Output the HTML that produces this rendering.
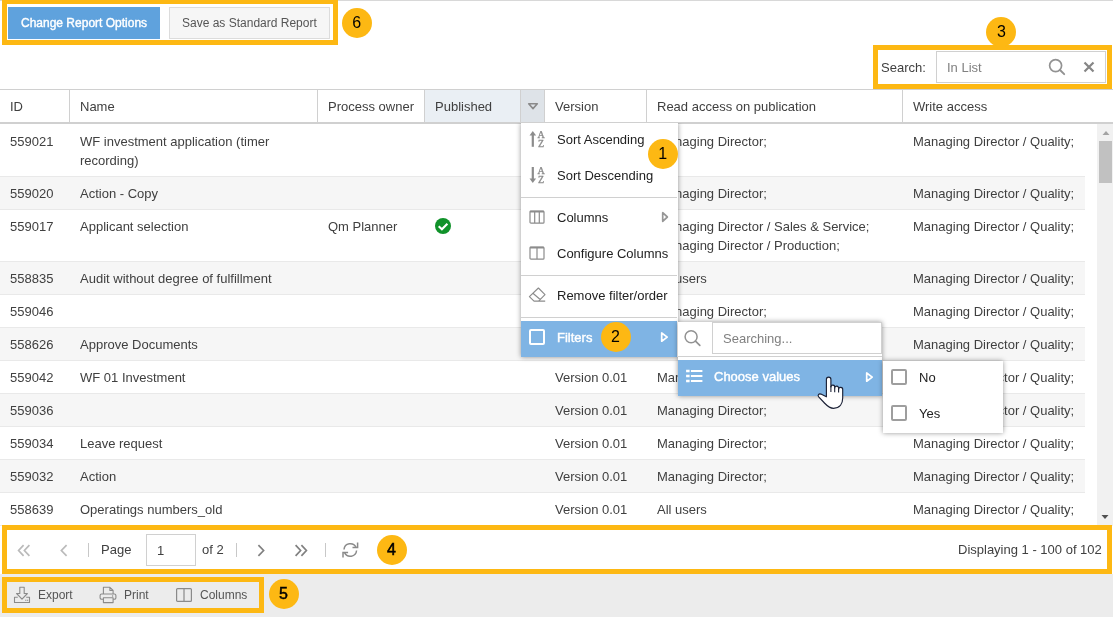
<!DOCTYPE html>
<html>
<head>
<meta charset="utf-8">
<title>Report</title>
<style>
html,body{margin:0;padding:0;}
body{width:1113px;height:617px;position:relative;overflow:hidden;background:#fff;font-family:"Liberation Sans",Arial,sans-serif;font-size:13px;color:#404040;}
.abs{position:absolute;}
.t{position:absolute;white-space:nowrap;line-height:18px;}
.hl{position:absolute;border:5px solid #fdb813;box-sizing:border-box;}
.num{position:absolute;width:30px;height:30px;border-radius:15px;background:#fdb813;color:#000;font-size:16px;line-height:30px;text-align:center;}
.row{position:absolute;left:0;width:1085px;border-bottom:1px solid #e9e9e9;box-sizing:border-box;}
.alt{background:#f6f6f6;}
.hsep{position:absolute;top:90px;width:1px;height:32px;background:#d0d0d0;}
.menu{position:absolute;background:#fff;box-sizing:border-box;box-shadow:0 0 5px rgba(0,0,0,0.42);}
.msep{position:absolute;height:1px;background:#d0d0d0;}
</style>
</head>
<body>
<div id="root" style="position:absolute;left:0;top:0;width:1113px;height:617px;will-change:transform;">
<!-- top line -->
<div class="abs" style="left:0;top:0;width:1113px;height:1px;background:#d8d8d8"></div>

<!-- top buttons -->
<div class="abs" style="left:8px;top:7px;width:152px;height:32px;background:#5fa2dd;"></div>
<div class="t" style="left:21px;top:14px;font-size:12px;color:#fff;-webkit-text-stroke:0.4px #fff;">Change Report Options</div>
<div class="abs" style="left:169px;top:7px;width:161px;height:32px;background:#f6f6f6;border:1px solid #dcdcdc;box-sizing:border-box;"></div>
<div class="t" style="left:182px;top:14px;font-size:12px;color:#555;">Save as Standard Report</div>
<div class="hl" style="left:2px;top:-1px;width:336px;height:46px;"></div>
<div class="num" style="left:341.6px;top:7.5px;">6</div>

<!-- search -->
<div class="t" style="left:881px;top:59px;">Search:</div>
<div class="abs" style="left:936px;top:51px;width:170px;height:32px;border:1px solid #d0d0d0;box-sizing:border-box;background:#fff;"></div>
<div class="t" style="left:947px;top:59px;color:#808080;">In List</div>
<svg class="abs" style="left:1046px;top:57px" width="22" height="22" viewBox="0 0 22 22"><circle cx="9.6" cy="8.6" r="6" fill="none" stroke="#929292" stroke-width="1.7"/><path d="M14 13 L18.2 17.2" stroke="#929292" stroke-width="1.9" stroke-linecap="round"/></svg>
<svg class="abs" style="left:1082px;top:60px" width="14" height="14" viewBox="0 0 14 14"><path d="M2.5 2.5 L11.5 11.5 M11.5 2.5 L2.5 11.5" stroke="#868686" stroke-width="2.2"/></svg>
<div class="hl" style="left:873px;top:45px;width:239px;height:44px;"></div>
<div class="num" style="left:986.4px;top:16.5px;">3</div>

<!-- header -->
<div class="abs" style="left:0;top:89px;width:1113px;height:1px;background:#d0d0d0"></div>
<div class="abs" style="left:0;top:122px;width:1113px;height:2px;background:#d0d0d0"></div>
<div class="abs" style="left:425px;top:90px;width:95px;height:32px;background:#eaeff4"></div>
<div class="abs" style="left:520px;top:90px;width:24px;height:32px;background:#dee3e8;border-left:1px solid #d0d0d0;box-sizing:border-box"></div>
<svg class="abs" style="left:526.5px;top:102px" width="12" height="10" viewBox="0 0 12 10"><path d="M1.7 1.8 L10.3 1.8 L6 6.6 Z" fill="none" stroke="#8a8a8a" stroke-width="1.6" stroke-linejoin="round"/></svg>
<div class="hsep" style="left:69px"></div>
<div class="hsep" style="left:317px"></div>
<div class="hsep" style="left:424px"></div>
<div class="hsep" style="left:544px"></div>
<div class="hsep" style="left:646px"></div>
<div class="hsep" style="left:902px"></div>
<div class="t" style="left:10px;top:98px;">ID</div>
<div class="t" style="left:80px;top:98px;">Name</div>
<div class="t" style="left:328px;top:98px;">Process owner</div>
<div class="t" style="left:435px;top:98px;">Published</div>
<div class="t" style="left:555px;top:98px;">Version</div>
<div class="t" style="left:657px;top:98px;">Read access on publication</div>
<div class="t" style="left:913px;top:98px;">Write access</div>

<!-- rows -->
<div class="row" style="top:124px;height:53px;"></div>
<div class="row alt" style="top:177px;height:33px;"></div>
<div class="row" style="top:210px;height:52px;"></div>
<div class="row alt" style="top:262px;height:33px;"></div>
<div class="row" style="top:295px;height:33px;"></div>
<div class="row alt" style="top:328px;height:33px;"></div>
<div class="row" style="top:361px;height:33px;"></div>
<div class="row alt" style="top:394px;height:33px;"></div>
<div class="row" style="top:427px;height:33px;"></div>
<div class="row alt" style="top:460px;height:33px;"></div>
<div class="row" style="top:493px;height:33px;"></div>

<div class="t" style="left:10px;top:133px;">559021</div>
<div class="t" style="left:80px;top:132px;line-height:19px;">WF investment application (timer<br>recording)</div>
<div class="t" style="left:657px;top:133px;">Managing Director;</div>
<div class="t" style="left:913px;top:133px;">Managing Director / Quality;</div>

<div class="t" style="left:10px;top:185px;">559020</div>
<div class="t" style="left:80px;top:185px;">Action - Copy</div>
<div class="t" style="left:657px;top:185px;">Managing Director;</div>
<div class="t" style="left:913px;top:185px;">Managing Director / Quality;</div>

<div class="t" style="left:10px;top:218px;">559017</div>
<div class="t" style="left:80px;top:218px;">Applicant selection</div>
<div class="t" style="left:328px;top:218px;">Qm Planner</div>
<svg class="abs" style="left:435px;top:218px" width="16" height="16" viewBox="0 0 16 16"><circle cx="8" cy="8" r="8" fill="#10922a"/><path d="M3.7 8.3 L6.9 11.3 L12.4 5.7" fill="none" stroke="#fff" stroke-width="2.1"/></svg>
<div class="t" style="left:657px;top:217px;line-height:19px;">Managing Director / Sales &amp; Service;<br>Managing Director / Production;</div>
<div class="t" style="left:913px;top:218px;">Managing Director / Quality;</div>

<div class="t" style="left:10px;top:270px;">558835</div>
<div class="t" style="left:80px;top:270px;">Audit without degree of fulfillment</div>
<div class="t" style="left:657px;top:270px;">All users</div>
<div class="t" style="left:913px;top:270px;">Managing Director / Quality;</div>

<div class="t" style="left:10px;top:303px;">559046</div>
<div class="t" style="left:657px;top:303px;">Managing Director;</div>
<div class="t" style="left:913px;top:303px;">Managing Director / Quality;</div>

<div class="t" style="left:10px;top:336px;">558626</div>
<div class="t" style="left:80px;top:336px;">Approve Documents</div>
<div class="t" style="left:657px;top:336px;">Managing Director;</div>
<div class="t" style="left:913px;top:336px;">Managing Director / Quality;</div>

<div class="t" style="left:10px;top:369px;">559042</div>
<div class="t" style="left:80px;top:369px;">WF 01 Investment</div>
<div class="t" style="left:555px;top:369px;">Version 0.01</div>
<div class="t" style="left:657px;top:369px;">Managing Director;</div>
<div class="t" style="left:913px;top:369px;">Managing Director / Quality;</div>

<div class="t" style="left:10px;top:402px;">559036</div>
<div class="t" style="left:555px;top:402px;">Version 0.01</div>
<div class="t" style="left:657px;top:402px;">Managing Director;</div>
<div class="t" style="left:913px;top:402px;">Managing Director / Quality;</div>

<div class="t" style="left:10px;top:435px;">559034</div>
<div class="t" style="left:80px;top:435px;">Leave request</div>
<div class="t" style="left:555px;top:435px;">Version 0.01</div>
<div class="t" style="left:657px;top:435px;">Managing Director;</div>
<div class="t" style="left:913px;top:435px;">Managing Director / Quality;</div>

<div class="t" style="left:10px;top:468px;">559032</div>
<div class="t" style="left:80px;top:468px;">Action</div>
<div class="t" style="left:555px;top:468px;">Version 0.01</div>
<div class="t" style="left:657px;top:468px;">Managing Director;</div>
<div class="t" style="left:913px;top:468px;">Managing Director / Quality;</div>

<div class="t" style="left:10px;top:501px;">558639</div>
<div class="t" style="left:80px;top:501px;">Operatings numbers_old</div>
<div class="t" style="left:555px;top:501px;">Version 0.01</div>
<div class="t" style="left:657px;top:501px;">All users</div>
<div class="t" style="left:913px;top:501px;">Managing Director / Quality;</div>

<!-- scrollbar -->
<div class="abs" style="left:1097px;top:124px;width:16px;height:402px;background:#f1f1f1"></div>
<div class="abs" style="left:1099px;top:141px;width:13px;height:42px;background:#c1c1c1"></div>
<svg class="abs" style="left:1097.5px;top:125px" width="16" height="16" viewBox="0 0 16 16"><path d="M4.5 10 L11.5 10 L8 6 Z" fill="#a3a3a3"/></svg>
<svg class="abs" style="left:1097px;top:509px" width="16" height="16" viewBox="0 0 16 16"><path d="M4.5 6 L11.5 6 L8 10 Z" fill="#505050"/></svg>

<!-- menus -->
<div class="menu" style="left:521px;top:123px;width:157px;height:234px;clip-path:inset(0 -10px -10px -10px);"></div>
<div class="abs" style="left:521px;top:321px;width:156px;height:36px;background:#7fb4e4"></div>
<div class="msep" style="left:521px;top:197px;width:156px;"></div>
<div class="msep" style="left:521px;top:275px;width:156px;"></div>
<div class="msep" style="left:521px;top:317px;width:156px;"></div>
<div class="t" style="left:557px;top:131px;color:#222;">Sort Ascending</div>
<div class="t" style="left:557px;top:167px;color:#222;">Sort Descending</div>
<div class="t" style="left:557px;top:209px;color:#222;">Columns</div>
<div class="t" style="left:557px;top:245px;color:#222;">Configure Columns</div>
<div class="t" style="left:557px;top:287px;color:#222;">Remove filter/order</div>
<div class="t" style="left:557px;top:329px;color:#fff;-webkit-text-stroke:0.4px #fff;">Filters</div>
<!-- menu icons -->
<svg class="abs" style="left:529px;top:131px" width="18" height="18" viewBox="0 0 18 18"><path d="M3.8 15.8 L3.8 3" fill="none" stroke="#8c8c8c" stroke-width="2.2"/><path d="M0.5 4.6 L3.8 0 L7.1 4.6 Z" fill="#8c8c8c"/><text x="8.4" y="6.9" font-family="Liberation Serif, serif" font-size="10" fill="#8c8c8c" stroke="#8c8c8c" stroke-width="0.3">A</text><text x="8.9" y="15.8" font-family="Liberation Serif, serif" font-size="10" fill="#8c8c8c" stroke="#8c8c8c" stroke-width="0.3">Z</text></svg>
<svg class="abs" style="left:529px;top:167px" width="18" height="18" viewBox="0 0 18 18"><path d="M3.8 0 L3.8 13" fill="none" stroke="#8c8c8c" stroke-width="2.2"/><path d="M0.5 11.4 L3.8 16 L7.1 11.4 Z" fill="#8c8c8c"/><text x="8.4" y="7" font-family="Liberation Serif, serif" font-size="10" fill="#8c8c8c" stroke="#8c8c8c" stroke-width="0.3">A</text><text x="8.9" y="15.8" font-family="Liberation Serif, serif" font-size="10" fill="#8c8c8c" stroke="#8c8c8c" stroke-width="0.3">Z</text></svg>
<svg class="abs" style="left:529px;top:210px" width="16" height="14" viewBox="0 0 16 14"><rect x="1" y="1" width="14" height="12.2" rx="1" fill="none" stroke="#8c8c8c" stroke-width="1.2"/><path d="M1 1.6 H15" stroke="#8c8c8c" stroke-width="1.8"/><path d="M5.7 1 V13 M10.3 1 V13" stroke="#8c8c8c" stroke-width="1.2"/></svg>
<svg class="abs" style="left:529px;top:246px" width="16" height="14" viewBox="0 0 16 14"><rect x="1" y="1" width="14" height="12.2" rx="1" fill="none" stroke="#8c8c8c" stroke-width="1.2"/><path d="M1 1.6 H15" stroke="#8c8c8c" stroke-width="1.8"/><path d="M8 1 V13" stroke="#8c8c8c" stroke-width="1.2"/></svg>
<svg class="abs" style="left:528px;top:287px" width="18" height="16" viewBox="0 0 18 16"><path d="M10.4 1 L17 7.6 L10.6 14.1 L6 14.1 L1.4 9.6 Z M4.9 6.3 L12.2 12.5 M10.6 14.1 H17.2" fill="none" stroke="#8c8c8c" stroke-width="1.15" stroke-linejoin="round"/></svg>
<div class="abs" style="left:529px;top:329px;width:16px;height:16px;border:2px solid #fff;border-radius:2px;box-sizing:border-box;"></div>
<svg class="abs" style="left:660.6px;top:211px" width="8" height="12" viewBox="0 0 8 12"><path d="M1.7 1.7 L1.7 10.3 L6.4 6 Z" fill="none" stroke="#969696" stroke-width="1.7" stroke-linejoin="round"/></svg>
<svg class="abs" style="left:660.4px;top:331px" width="9" height="12" viewBox="0 0 9 12"><path d="M1.7 2 L1.7 10.2 L7.2 6.1 Z" fill="none" stroke="#fff" stroke-width="1.7" stroke-linejoin="round"/></svg>
<div class="num" style="left:647.6px;top:138.6px;">1</div>
<div class="num" style="left:600.5px;top:322.3px;">2</div>

<!-- submenu -->
<div class="menu" style="left:678px;top:322px;width:204px;height:74px;"></div>
<div class="abs" style="left:678px;top:360px;width:204px;height:36px;background:#7fb4e4"></div>
<div class="msep" style="left:678px;top:356px;width:204px;"></div>
<svg class="abs" style="left:683px;top:329px" width="20" height="20" viewBox="0 0 20 20"><circle cx="8.1" cy="7.7" r="6" fill="none" stroke="#929292" stroke-width="1.5"/><path d="M12.5 12.1 L16.8 16.3" stroke="#929292" stroke-width="1.7" stroke-linecap="round"/></svg>
<div class="abs" style="left:712px;top:322px;width:170px;height:32px;border:1px solid #d0d0d0;box-sizing:border-box;background:#fff;"></div>
<div class="t" style="left:723px;top:330px;color:#808080;">Searching...</div>
<svg class="abs" style="left:685px;top:368px" width="18" height="16" viewBox="0 0 18 16"><path d="M5.9 3 H17.4 M5.9 8 H17.4 M5.9 13 H17.4" stroke="#fff" stroke-width="2.1"/><path d="M1.1 3 H4.6 M1.1 8 H4.6 M1.1 13 H4.6" stroke="#fff" stroke-width="2.7"/></svg>
<div class="t" style="left:714px;top:368px;color:#fff;-webkit-text-stroke:0.4px #fff;">Choose values</div>
<svg class="abs" style="left:865.4px;top:370.5px" width="9" height="12" viewBox="0 0 9 12"><path d="M1.7 2 L1.7 10.2 L7.2 6.1 Z" fill="none" stroke="#fff" stroke-width="1.7" stroke-linejoin="round"/></svg>

<!-- sub-submenu -->
<div class="menu" style="left:883px;top:361px;width:120px;height:72px;"></div>
<div class="abs" style="left:891px;top:369px;width:16px;height:16px;border:2px solid #9e9e9e;border-radius:2px;box-sizing:border-box;background:#fff"></div>
<div class="abs" style="left:891px;top:405px;width:16px;height:16px;border:2px solid #9e9e9e;border-radius:2px;box-sizing:border-box;background:#fff"></div>
<div class="t" style="left:919px;top:369px;color:#222;">No</div>
<div class="t" style="left:919px;top:405px;color:#222;">Yes</div>

<!-- hand cursor -->
<svg class="abs" style="left:805px;top:365px" width="55" height="50" viewBox="0 0 55 50"><path d="M21.4 31.8 V14.4 A2.25 2.25 0 0 1 25.9 14.4 V21.8 A1.9 1.9 0 0 1 29.7 22.3 V22.9 A1.95 1.95 0 0 1 33.6 23.3 V24.3 A2.05 2.05 0 0 1 37.7 24.6 V33 C37.7 38.5 35 43.3 28.5 43.3 C24 43.3 22 40.6 19 37.5 L13.7 31.9 C12.3 30.3 13.8 28.2 15.9 29.1 Z" fill="#fff" stroke="#1b2136" stroke-width="1.15" stroke-linejoin="round"/><path d="M25.9 21 V27 M29.7 22.6 V27.2 M33.6 23.6 V27.4" stroke="#1b2136" stroke-width="1.1" fill="none"/></svg>

<!-- paging toolbar -->
<div class="abs" style="left:0;top:526px;width:1113px;height:48px;background:#fff"></div>
<svg class="abs" style="left:17px;top:544px" width="14" height="13" viewBox="0 0 14 13"><path d="M6.6 1.2 L1.6 6.5 L6.6 11.8 M12.4 1.2 L7.4 6.5 L12.4 11.8" fill="none" stroke="#bababa" stroke-width="1.7"/></svg>
<svg class="abs" style="left:59px;top:544px" width="10" height="13" viewBox="0 0 10 13"><path d="M7.6 1.2 L2.4 6.5 L7.6 11.8" fill="none" stroke="#bababa" stroke-width="1.7"/></svg>
<div class="abs" style="left:88px;top:543px;width:1px;height:14px;background:#c8c8c8"></div>
<div class="t" style="left:101px;top:541px;">Page</div>
<div class="abs" style="left:146px;top:534px;width:50px;height:32px;border:1px solid #d0d0d0;box-sizing:border-box;background:#fff"></div>
<div class="t" style="left:157px;top:542px;">1</div>
<div class="t" style="left:202px;top:541px;">of 2</div>
<div class="abs" style="left:236px;top:543px;width:1px;height:14px;background:#c8c8c8"></div>
<svg class="abs" style="left:255.5px;top:544px" width="10" height="13" viewBox="0 0 10 13"><path d="M2.4 1.2 L7.6 6.5 L2.4 11.8" fill="none" stroke="#808080" stroke-width="1.7"/></svg>
<svg class="abs" style="left:294px;top:544px" width="14" height="13" viewBox="0 0 14 13"><path d="M1.6 1.2 L6.6 6.5 L1.6 11.8 M7.4 1.2 L12.4 6.5 L7.4 11.8" fill="none" stroke="#808080" stroke-width="1.7"/></svg>
<div class="abs" style="left:325px;top:543px;width:1px;height:14px;background:#c8c8c8"></div>
<svg class="abs" style="left:341px;top:541px" width="19" height="18" viewBox="0 0 19 18"><path d="M3.02 8.45 A6.3 6.3 0 0 1 15 6.34 M15.58 9.55 A6.3 6.3 0 0 1 3.59 11.66" fill="none" stroke="#8a8a8a" stroke-width="1.5"/><path d="M16.6 1.4 V6.5 H11.5 M2 16.6 V11.5 H7.1" fill="none" stroke="#8a8a8a" stroke-width="1.5"/></svg>
<div class="t" style="left:958px;top:541px;">Displaying 1 - 100 of 102</div>
<div class="hl" style="left:2px;top:525px;width:1110px;height:49px;"></div>
<div class="num" style="left:376.5px;top:534.5px;-webkit-text-stroke:0.5px #000;">4</div>

<!-- bottom toolbar -->
<div class="abs" style="left:0;top:574px;width:1113px;height:43px;background:#ececec"></div>
<svg class="abs" style="left:13px;top:586px" width="18" height="18" viewBox="0 0 18 18"><path d="M6.8 1.3 H11.2 V7.5 H14.4 L9 13.2 L3.6 7.5 H6.8 Z" fill="none" stroke="#8a8a8a" stroke-width="1.1" stroke-linejoin="round"/><path d="M4.8 11.3 H1.5 V16.5 H16.5 V11.3 H13.2" fill="none" stroke="#8a8a8a" stroke-width="1.1" stroke-linejoin="round"/><path d="M12.2 14.3 H13.4 M14 14.3 H15.2" stroke="#8a8a8a" stroke-width="1.1"/></svg>
<div class="t" style="left:38px;top:586px;font-size:12px;color:#555;">Export</div>
<svg class="abs" style="left:99px;top:586px" width="18" height="18" viewBox="0 0 18 18"><path d="M4.4 8 V1.3 H10.9 L14.1 4.5 V8 M10.9 1.3 V4.5 H14.1" fill="none" stroke="#8a8a8a" stroke-width="1.1" stroke-linejoin="round"/><path d="M4.4 13.2 H2.6 a1.5 1.5 0 0 1 -1.5 -1.5 V9.5 a1.5 1.5 0 0 1 1.5 -1.5 H15.4 a1.5 1.5 0 0 1 1.5 1.5 V11.7 a1.5 1.5 0 0 1 -1.5 1.5 H14.1" fill="none" stroke="#8a8a8a" stroke-width="1.1"/><path d="M4.4 11.8 H14.1 V16.6 H4.4 Z" fill="none" stroke="#8a8a8a" stroke-width="1.1" stroke-linejoin="round"/><circle cx="13.6" cy="10" r="0.7" fill="#8a8a8a"/></svg>
<div class="t" style="left:124px;top:586px;font-size:12px;color:#555;">Print</div>
<svg class="abs" style="left:176px;top:588px" width="16" height="14" viewBox="0 0 16 14"><rect x="0.6" y="0.6" width="14.8" height="12.8" rx="1" fill="none" stroke="#8a8a8a" stroke-width="1.2"/><path d="M8 1 V13" stroke="#8a8a8a" stroke-width="1.2"/></svg>
<div class="t" style="left:200px;top:586px;font-size:12px;color:#555;">Columns</div>
<div class="hl" style="left:2px;top:577px;width:262px;height:36px;"></div>
<div class="num" style="left:268.5px;top:578.5px;-webkit-text-stroke:0.5px #000;">5</div>
</div>
</body>
</html>
